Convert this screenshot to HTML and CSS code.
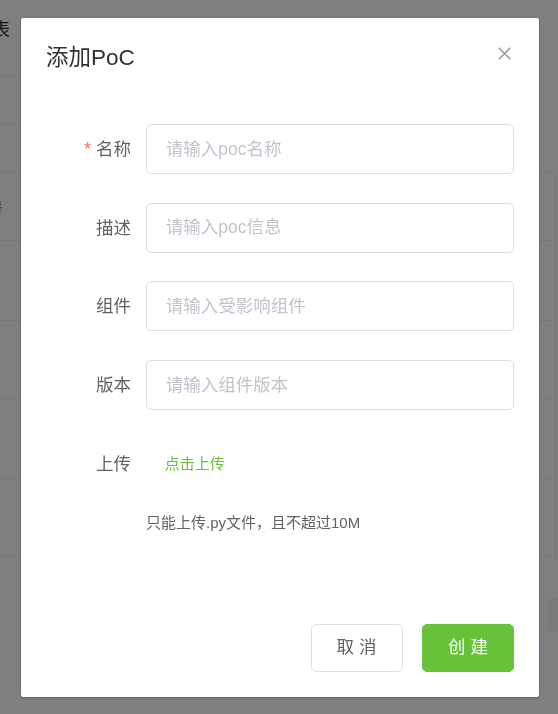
FILE: index.html
```html
<!DOCTYPE html>
<html lang="zh-CN">
<head>
<meta charset="utf-8">
<title>添加PoC</title>
<link rel="stylesheet" href="styles.css">
</head>
<body>
<div class="page">
  <div class="page-title"><span class="page-title-text">列表</span></div>
  <div class="toolbar"></div>
  <div class="table">
    <div class="table-head"><span class="th-text">序号</span></div>
    <div class="table-row r80"></div>
    <div class="table-row r78"></div>
    <div class="table-row r80"></div>
    <div class="table-row r78"></div>
  </div>
  <div class="pager"><div class="pager-btn"></div></div>
</div>

<div class="overlay">
  <div class="dialog">
    <div class="dialog-header">
      <span class="dialog-title">添加PoC</span>
      <button class="dialog-close" aria-label="关闭">
        <svg width="13" height="13" viewBox="0 0 13 13"><path d="M0.8 0.8 L12.2 12.2 M12.2 0.8 L0.8 12.2" stroke="#909399" stroke-width="1.3" fill="none"/></svg>
      </button>
    </div>
    <div class="dialog-body">
      <div class="form-item">
        <label class="form-label"><span class="req">*</span>名称</label>
        <div class="form-content"><input class="input" placeholder="请输入poc名称"></div>
      </div>
      <div class="form-item">
        <label class="form-label">描述</label>
        <div class="form-content"><input class="input" placeholder="请输入poc信息"></div>
      </div>
      <div class="form-item">
        <label class="form-label">组件</label>
        <div class="form-content"><input class="input" placeholder="请输入受影响组件"></div>
      </div>
      <div class="form-item">
        <label class="form-label">版本</label>
        <div class="form-content"><input class="input" placeholder="请输入组件版本"></div>
      </div>
      <div class="form-item">
        <label class="form-label">上传</label>
        <div class="form-content">
          <div class="upload"><button class="text-btn">点击上传</button></div>
          <div class="upload-tip">只能上传.py文件，且不超过10M</div>
        </div>
      </div>
    </div>
    <div class="dialog-footer">
      <button class="btn btn-default">取 消</button>
      <button class="btn btn-primary">创 建</button>
    </div>
  </div>
</div>
</body>
</html>
```

FILE: styles.css
```css
* { box-sizing: border-box; }
html, body {
  margin: 0;
  padding: 0;
  width: 558px;
  height: 714px;
  overflow: hidden;
  background: #ffffff;
  font-family: "Liberation Sans", "Noto Sans CJK SC", sans-serif;
}

/* underlying page */
.page {
  width: 558px;
  height: 714px;
  overflow: hidden;
  display: flex;
  flex-direction: column;
}
.page-title {
  height: 76px;
  width: 500px;
  border-bottom: 1px solid #ebeef5;
  padding-top: 17px;
}
.page-title-text {
  display: inline-block;
  margin-left: -26px;
  font-size: 18px;
  line-height: 26px;
  color: #303133;
}
.toolbar {
  height: 49px;
  width: 500px;
  border-bottom: 1px solid #ebeef5;
}
.table {
  margin-top: 47px;
  width: 557px;
  border-top: 1px solid #ebeef5;
  border-right: 1px solid #ebeef5;
}
.table-head {
  height: 68px;
  border-bottom: 1px solid #ebeef5;
  display: flex;
  align-items: center;
}
.th-text {
  margin-left: -25px;
  font-size: 14px;
  font-weight: bold;
  color: #909399;
}
.table-row { border-bottom: 1px solid #ebeef5; }
.r80 { height: 80px; }
.r78 { height: 78px; }
.pager {
  margin-top: 41px;
  padding-left: 548px;
}
.pager-btn {
  width: 30px;
  height: 34px;
  background: #f4f4f5;
  border-radius: 2px;
}

/* overlay + dialog */
.overlay {
  position: fixed;
  inset: 0;
  background: rgba(0, 0, 0, 0.5);
  padding-top: 18px;
}
.dialog {
  margin-left: 21px;
  width: 518px;
  background: #ffffff;
  border-radius: 2px;
  box-shadow: 0 1px 3px rgba(0, 0, 0, 0.3);
}
.dialog-header {
  padding: 25px 28px 12.5px 25px;
  display: flex;
  justify-content: space-between;
  align-items: flex-start;
}
.dialog-title {
  font-size: 22.5px;
  line-height: 30px;
  color: #303133;
}
.dialog-close {
  margin-top: 4px;
  padding: 0;
  border: 0;
  background: none;
  width: 13px;
  height: 13px;
  display: block;
}
.dialog-close svg { display: block; }

.dialog-body {
  padding: 38.5px 25px 35px 25px;
}
.form-item {
  display: flex;
  margin-bottom: 28.7px;
}
.form-label {
  width: 100px;
  flex: none;
  text-align: right;
  padding-right: 15px;
  font-size: 17.5px;
  line-height: 50px;
  color: #606266;
}
.req {
  color: #f56c6c;
  margin-right: 5px;
}
.form-content {
  flex: 1;
  min-width: 0;
}
.input {
  display: block;
  width: 100%;
  height: 50px;
  padding: 0 18.75px;
  border: 1px solid #dcdfe6;
  border-radius: 5px;
  font-family: "Liberation Sans", "Noto Sans CJK SC", sans-serif;
  font-size: 17.5px;
  color: #606266;
  outline: none;
  background: #fff;
}
.input::placeholder { color: #c0c4cc; }

.upload {
  height: 50px;
  display: flex;
  align-items: center;
}
.text-btn {
  border: 0;
  background: none;
  padding: 11.25px 18.75px;
  font-family: "Liberation Sans", "Noto Sans CJK SC", sans-serif;
  font-size: 15px;
  line-height: 15px;
  color: #67c23a;
}
.upload-tip {
  margin-top: 8.75px;
  font-size: 15px;
  line-height: 50px;
  color: #606266;
}

.dialog-footer {
  padding: 12.5px 25px 25px 25px;
  display: flex;
  justify-content: flex-end;
  gap: 19.5px;
}
.btn {
  width: 92px;
  padding: 14.6px 0;
  border-radius: 5px;
  font-family: "Liberation Sans", "Noto Sans CJK SC", sans-serif;
  font-size: 17.5px;
  line-height: 17.5px;
  text-align: center;
}
.btn-default {
  background: #ffffff;
  border: 1px solid #dcdfe6;
  color: #606266;
}
.btn-primary {
  background: #67c23a;
  border: 1px solid #67c23a;
  color: #ffffff;
}
```
